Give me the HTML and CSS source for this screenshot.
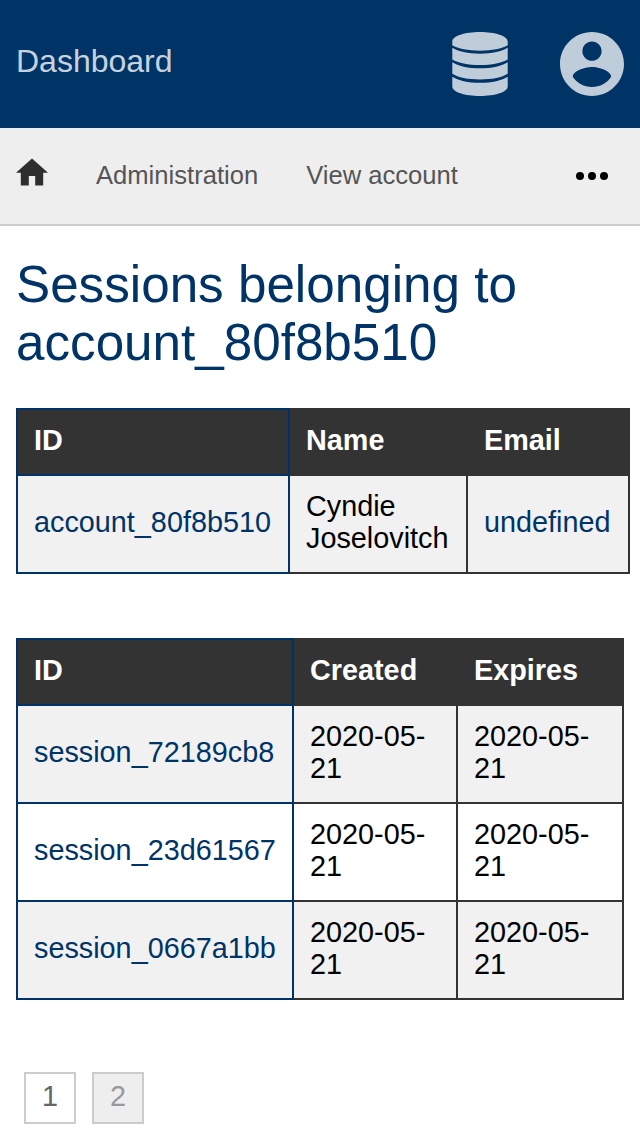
FILE: index.html
```html
<!DOCTYPE html>
<html lang="en">
<head>
<meta charset="utf-8">
<title>Dashboard</title>
<link rel="stylesheet" href="styles.css">
</head>
<body>
<header class="topbar">
  <a class="brand">Dashboard</a>
  <div class="tools">
    <svg class="tool-icon" viewBox="0 0 64 64"><path d="M32 0C47 0 59.700 4 59.700 9.500V13.300C54 16.600 44 18.700 32 18.700S10 16.600 4.300 13.300V9.500C4.300 4 17 0 32 0zM4.300 15.800C10 19.500 20 21.700 32 21.700S54 19.500 59.700 15.800V27.500C54 31 44 33 32 33S10 31 4.300 27.500zM4.300 30.200C10 34 20 36.300 32 36.300S54 34 59.700 30.200V41.800C54 45.500 44 47.500 32 47.500S10 45.500 4.300 41.800zM4.300 44.700C10 48.500 20 50.800 32 50.800S54 48.500 59.700 44.700V54.500C59.700 60 47 64 32 64S4.300 60 4.300 54.500z"/></svg>
    <svg class="tool-icon" viewBox="2 2 20 20"><path d="M12 2C6.480 2 2 6.480 2 12s4.480 10 10 10 10-4.480 10-10S17.520 2 12 2zm0 3c1.660 0 3 1.340 3 3s-1.340 3-3 3-3-1.340-3-3 1.340-3 3-3zm0 14.200c-2.500 0-4.710-1.280-6-3.220.03-1.990 4-3.080 6-3.080 1.990 0 5.970 1.090 6 3.080-1.290 1.940-3.500 3.220-6 3.220z"/></svg>
  </div>
</header>
<nav class="menu">
  <svg class="home" viewBox="2 2.750 20 17.500"><path d="M10 20v-6h4v6h5v-8h3L12 3 2 12h3v8z"/></svg>
  <a class="menu-link">Administration</a>
  <a class="menu-link">View account</a>
  <svg class="more" viewBox="0 0 32 8"><circle cx="4" cy="4" r="4"/><circle cx="16" cy="4" r="4"/><circle cx="28" cy="4" r="4"/></svg>
</nav>
<main class="content">
  <h1>Sessions belonging to account_80f8b510</h1>
  <table class="account">
    <colgroup><col class="account-id"><col class="account-name"><col class="account-email"></colgroup>
    <thead><tr><th>ID</th><th>Name</th><th>Email</th></tr></thead>
    <tbody><tr><td><a>account_80f8b510</a></td><td>Cyndie Joselovitch</td><td><a>undefined</a></td></tr></tbody>
  </table>
  <table class="sessions">
    <colgroup><col class="session-id"><col class="session-created"><col class="session-expires"></colgroup>
    <thead><tr><th>ID</th><th>Created</th><th>Expires</th></tr></thead>
    <tbody>
      <tr><td><a>session_72189cb8</a></td><td>2020-05-21</td><td>2020-05-21</td></tr>
      <tr><td><a>session_23d61567</a></td><td>2020-05-21</td><td>2020-05-21</td></tr>
      <tr><td><a>session_0667a1bb</a></td><td>2020-05-21</td><td>2020-05-21</td></tr>
    </tbody>
  </table>
  <div class="pager"><a class="page">1</a><a class="page current">2</a></div>
</main>
</body>
</html>
```
FILE: styles.css
```css
* { box-sizing: border-box; }
body {
  margin: 0;
  background: #fff;
  color: #000;
  font: 28.8px/32px "Liberation Sans", Arial, sans-serif;
}
svg { display: block; flex: none; }
.topbar {
  display: flex;
  align-items: center;
  justify-content: space-between;
  height: 128px;
  padding: 0 16px;
  background: #036;
}
.brand {
  color: rgba(255, 255, 255, .8);
  font-size: 32px;
  line-height: 36px;
  padding-bottom: 6px;
}
.tools { display: flex; gap: 48px; }
.tool-icon { width: 64px; height: 64px; fill: #bfccd9; }
.menu {
  display: flex;
  align-items: center;
  gap: 48px;
  height: 98px;
  padding: 0 32px 0 16px;
  background: #eee;
  border-bottom: 2px solid #ccc;
  color: #555;
  font-size: 25.6px;
}
.menu-link { padding-bottom: 2px; }
.home { width: 32px; height: 28px; margin-bottom: 8px; fill: #2e2e2e; }
.more { width: 32px; height: 8px; margin-left: auto; fill: #000; }
.content { padding: 0 16px; }
h1 {
  margin: 0;
  padding: 30px 0 36px;
  color: #036;
  font-size: 51.2px;
  font-weight: 400;
  line-height: 58px;
}
table { table-layout: fixed; border-collapse: collapse; margin-bottom: 64px; }
.account { width: 614px; }
.account-id { width: 272px; }
.account-name { width: 178px; }
.account-email { width: 162px; }
.sessions { width: 608px; margin-bottom: 72px; }
.session-id { width: 276px; }
.session-created { width: 164px; }
.session-expires { width: 166px; }
th, td {
  padding: 14px 16px 18px;
  border: 2px solid #333;
  text-align: left;
  vertical-align: middle;
}
th { background: #333; color: #fff; }
th:first-child, td:first-child { border-color: #036; }
td a { color: #036; }
tbody tr:nth-child(odd) { background: #f1f1f1; }
.pager { display: flex; gap: 16px; padding: 0 8px; }
.page {
  width: 52px;
  height: 52px;
  border: 2px solid #ccc;
  color: #666;
  line-height: 44px;
  text-align: center;
}
.current { background: #eee; color: #999; }
```
